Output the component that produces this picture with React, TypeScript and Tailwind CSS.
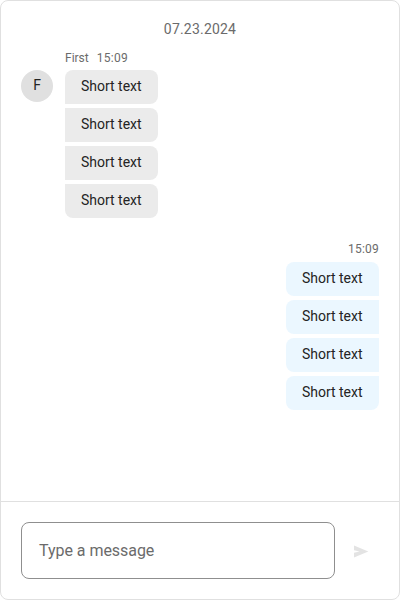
const received = ["Short text", "Short text", "Short text", "Short text"];
const sent = ["Short text", "Short text", "Short text", "Short text"];

export default function App() {
  return (
    <div className="flex h-[600px] w-[400px] flex-col rounded-lg border border-[#e0e0e0] bg-white font-[Roboto,sans-serif] text-[#242424]">
      <div className="flex min-h-0 flex-1 flex-col px-5 pt-[18px]">
        <div className="text-center text-sm leading-5 tracking-[0.2px] text-[#6b6b6b]">07.23.2024</div>
        <div className="mt-[11px] flex gap-3">
          <div className="mt-5 flex size-8 items-center justify-center rounded-full bg-[#e0e0e0] pb-0.5 text-sm">F</div>
          <div className="flex flex-col items-start">
            <div className="flex h-5 gap-2 text-xs leading-4 text-[#6b6b6b]">
              <span>First</span>
              <span className="tracking-[0.25px]">15:09</span>
            </div>
            <div className="flex flex-col gap-1">
              {received.map((text, i) => (
                <div key={i} className={`h-[34px] rounded-r-lg bg-[#ebebeb] px-4 text-sm leading-8 tracking-[-0.01px] ${i === 0 ? "rounded-tl-lg" : ""} ${i === 3 ? "rounded-bl-lg" : ""}`}>{text}</div>
              ))}
            </div>
          </div>
        </div>
        <div className="mt-[23px] flex flex-col items-end">
          <div className="h-[21px] text-xs leading-4 tracking-[0.2px] text-[#6b6b6b]">15:09</div>
          <div className="flex flex-col gap-1">
            {sent.map((text, i) => (
              <div key={i} className={`h-[34px] w-[93px] rounded-l-lg bg-[#ebf7ff] pl-4 text-sm leading-8 tracking-[-0.02px] ${i === 0 ? "rounded-tr-lg" : ""} ${i === 3 ? "rounded-br-lg" : ""}`}>{text}</div>
            ))}
          </div>
        </div>
      </div>
      <div className="flex items-center border-t border-[#e0e0e0] py-5 pl-5">
        <div className="flex h-[57px] w-[314px] items-center rounded-lg border border-[#8f8f8f] px-[17px] text-base tracking-[-0.04px] text-[#6b6b6b]">Type a message</div>
        <button className="ml-[17px] text-[#e3e3e3]" aria-label="Send">
          <svg width="18" height="18" viewBox="0 0 18 18" fill="currentColor"><path d="M2 3.6 16.3 9.5 2 15.4V10.7L7.5 9.5 2 8.3Z" /></svg>
        </button>
      </div>
    </div>
  );
}
